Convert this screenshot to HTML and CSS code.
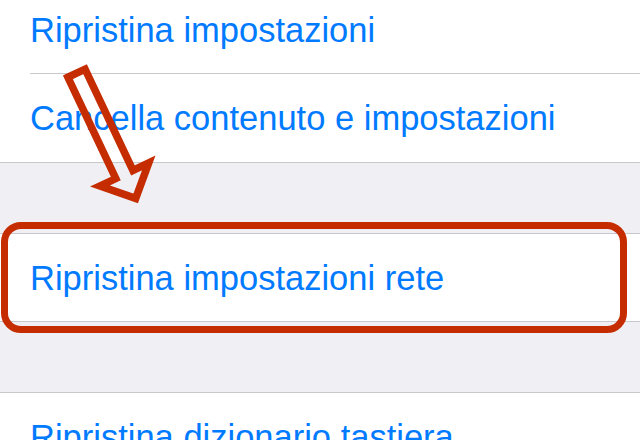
FILE: index.html
```html
<!DOCTYPE html>
<html lang="it">
<head>
    <meta charset="UTF-8">
    <meta name="viewport" content="width=device-width, initial-scale=1.0">
    <title>Ripristina</title>
    <link rel="stylesheet" href="styles.css">
</head>
<body>
    <div class="screen">
        <section class="group group-first">
            <div class="cell"><div class="cell-label">Ripristina impostazioni</div></div>
            <div class="cell"><div class="cell-label">Cancella contenuto e impostazioni</div></div>
        </section>

        <section class="group">
            <div class="cell"><div class="cell-label">Ripristina impostazioni rete</div></div>
        </section>

        <section class="group">
            <div class="cell"><div class="cell-label">Ripristina dizionario tastiera</div></div>
        </section>

        <!-- annotations drawn over the list -->
        <div class="highlight"></div>
        <svg class="arrow" width="640" height="440" viewBox="0 0 640 440">
            <polygon transform="translate(76.5 73.2) rotate(-25.3)"
                     points="-9.5,0 9.5,0 9.5,112 27,112 0,138.5 -27,112 -9.5,112"
                     fill="none" stroke="#c52c00" stroke-width="7.5"
                     stroke-linejoin="miter" stroke-miterlimit="10"/>
        </svg>
    </div>
</body>
</html>
```

FILE: styles.css
```css
:root {
    --blue: #007aff;
    --red: #c52c00;
    --line: #c8c7cc;
    --bg: #efeff4;
    --white: #ffffff;
}

* {
    margin: 0;
    padding: 0;
    box-sizing: border-box;
}

body {
    background: var(--bg);
    font-family: 'Liberation Sans', Arial, sans-serif;
    overflow: hidden;
}

.screen {
    position: relative;
    width: 640px;
    height: 440px;
    overflow: hidden;
}

.group {
    background: var(--white);
    border-top: 1px solid var(--line);
    border-bottom: 1px solid var(--line);
    margin-top: 70px;
}

.group-first {
    margin-top: -15px;
}

.cell {
    padding-left: 30px;
}

.cell-label {
    height: 87px;
    line-height: 88px;
    font-size: 34.5px;
    color: var(--blue);
    white-space: nowrap;
}

.cell + .cell .cell-label {
    height: 88px;
}

.cell + .cell {
    border-top: 1px solid var(--line);
    margin-left: 30px;
    padding-left: 0;
}

.highlight {
    position: absolute;
    left: 1px;
    top: 222px;
    width: 626px;
    height: 111px;
    border: 7px solid var(--red);
    border-radius: 20px;
}

.arrow {
    position: absolute;
    left: 0;
    top: 0;
    pointer-events: none;
}
```
